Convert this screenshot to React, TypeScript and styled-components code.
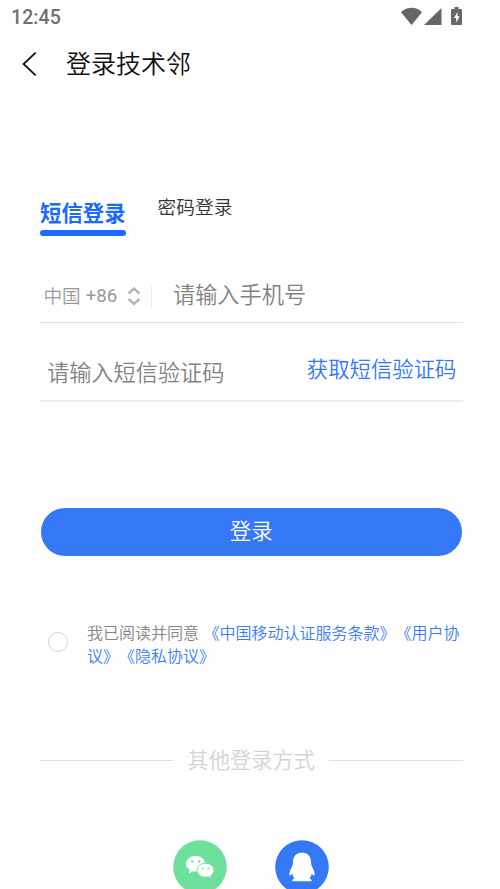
import React from 'react';
import styled, { createGlobalStyle } from 'styled-components';

const GlobalStyle = createGlobalStyle`
  * { box-sizing: border-box; }
  body { margin: 0; background: #fefefe; overflow: hidden; }
`;

const Screen = styled.main`
  width: 500px;
  height: 889px;
  overflow: hidden;
  display: flex;
  flex-direction: column;
  background: #fefefe;
  font-family: 'Noto Sans CJK SC', sans-serif;
  font-weight: 350;
  white-space: nowrap;
  text-spacing-trim: space-all;
`;

const StatusBar = styled.header`
  height: 34px;
  flex: none;
  display: flex;
  align-items: center;
  justify-content: space-between;
  padding: 0 37px 0 11px;
`;

const Clock = styled.time`
  font: 500 19.5px/34px Roboto, sans-serif;
  letter-spacing: 0.1px;
  color: #707070;
  padding-top: 1px;
`;

const StatusIcons = styled.svg`
  display: block;
  width: 62px;
  height: 34px;
`;

const TitleBar = styled.div`
  height: 60px;
  flex: none;
  display: flex;
  align-items: center;
  padding: 0 0 2px 21px;
`;

const BackIcon = styled.svg`
  width: 17px;
  height: 26px;
  margin: 2px 28px 0 0;
`;

const Title = styled.h1`
  margin: 0;
  padding-bottom: 3px;
  font-size: 25px;
  line-height: 36px;
  font-weight: inherit;
  color: #111;
`;

const Content = styled.section`
  width: 422.5px;
  margin: 101px 0 0 40px;
  flex: none;
`;

const Tabs = styled.nav`
  height: 42px;
  display: flex;
  gap: 32px;
`;

const Tab = styled.div<{ $active?: boolean }>`
  height: 42px;
  font-size: ${p => (p.$active ? '21.4px' : '18.7px')};
  line-height: ${p => (p.$active ? '34px' : '22px')};
  font-weight: ${p => (p.$active ? 700 : 'inherit')};
  color: ${p => (p.$active ? '#1a6aff' : '#333')};
`;

const Indicator = styled.div`
  height: 6px;
  margin-top: 1px;
  border-radius: 3px;
  background: #1a6aff;
`;

const Field = styled.div<{ $height: number; $top: number; $line: string }>`
  height: ${p => p.$height}px;
  margin-top: ${p => p.$top}px;
  display: flex;
  align-items: flex-start;
  border-bottom: ${p => p.$line};
`;

const Country = styled.div`
  display: flex;
  width: 112px;
  height: 22px;
  margin-top: 9px;
  align-items: center;
  padding-left: 3.5px;
  font-size: 18.6px;
  line-height: 32px;
  color: #999;
  border-right: 1px solid #e4ecf3;
`;

const CountryName = styled.span`
  padding-bottom: 4px;
`;

const DialCode = styled.span`
  font-family: Roboto, sans-serif;
  font-weight: 400;
  margin: 0 10px 0 5px;
  padding-bottom: 2px;
`;

const Sorter = styled.svg`
  width: 14px;
  height: 20px;
  margin-bottom: 3px;
`;

const Placeholder = styled.span<{ $left: number }>`
  margin: -2px 0 0 ${p => p.$left}px;
  font-size: 22.2px;
  line-height: 36px;
  color: #828282;
`;

const CodeButton = styled.button`
  margin: -5px 6px 0 auto;
  padding: 0;
  border: 0;
  background: none;
  font-family: inherit;
  font-weight: inherit;
  font-size: 21.4px;
  line-height: 36px;
  color: #3478f6;
`;

const Submit = styled.button`
  display: block;
  width: 421px;
  height: 48px;
  margin: 106px 0 0 0.75px;
  padding: 0 0 5px;
  border: 0;
  border-radius: 24px;
  background: #3478f6;
  color: #fff;
  font-family: inherit;
  font-weight: inherit;
  font-size: 21.4px;
  line-height: 43px;
`;

const Agreement = styled.div`
  display: flex;
  margin-top: 65px;
  padding-left: 8px;
`;

const Radio = styled.span`
  flex: none;
  width: 20px;
  height: 20px;
  margin: 11px 19px 0 0;
  border: 1px solid #d2d2d2;
  border-radius: 50%;
`;

const Terms = styled.p`
  margin: 0;
  font-size: 16px;
  line-height: 22.5px;
  color: #858585;
`;

const TermsLink = styled.span`
  margin-left: 1px;
  color: #3b7df6;
`;

const Divider = styled.div`
  display: flex;
  align-items: center;
  gap: 14px;
  height: 32px;
  margin-top: 78px;
  color: #d4d4d4;
`;

const DividerLabel = styled.span`
  padding-bottom: 3px;
  font-size: 21.3px;
  line-height: 32px;
`;

const Rule = styled.span`
  flex: 1;
  height: 1px;
  background: #dedede;
`;

const Providers = styled.div`
  display: flex;
  flex: none;
  gap: 48px;
  margin: 64px 0 0 133px;
`;

const ProviderIcon = styled.svg`
  display: block;
  flex: none;
  width: 54px;
  height: 54px;
`;

export default function App() {
  return (
    <Screen>
      <GlobalStyle />
      <StatusBar>
        <Clock>12:45</Clock>
        <StatusIcons viewBox="0 0 62 34" fill="#666">
          <path d="M0 12.2C6 6.4 15.5 6.4 21 12.2L10.6 25Z" />
          <path d="M23 25L40.5 8V25Z" />
          <path fillRule="evenodd" d="M53.5 7h4v2h2c1 0 1.500.5 1.500 1.500v13c0 1-.5 1.500-1.500 1.500h-8c-1 0-1.500-.5-1.500-1.500v-13c0-1 .5-1.500 1.500-1.500h2zM56.500 12l-3.500 6h2.200v4.500l3.500-6.300h-2.200z" />
        </StatusIcons>
      </StatusBar>
      <TitleBar>
        <BackIcon viewBox="0 0 17 26" fill="none" stroke="#111" strokeWidth="1.8">
          <path d="M14.700 1.700L2.500 13L14.700 24.300" />
        </BackIcon>
        <Title>登录技术邻</Title>
      </TitleBar>
      <Content>
        <Tabs>
          <Tab $active>
            短信登录
            <Indicator />
          </Tab>
          <Tab>密码登录</Tab>
        </Tabs>
        <Field $height={46} $top={40} $line="1px solid #dfe1e8">
          <Country>
            <CountryName>中国</CountryName>
            <DialCode>+86</DialCode>
            <Sorter viewBox="0 0 14 20" fill="none" stroke="#b5b5b5" strokeWidth="2.4">
              <path d="M1.500 7.500L7 2.500L12.500 7.500M1.500 13L7 18L12.500 13" />
            </Sorter>
          </Country>
          <Placeholder $left={21}>请输入手机号</Placeholder>
        </Field>
        <Field $height={47} $top={32} $line="2px solid #ededf3">
          <Placeholder $left={7}>请输入短信验证码</Placeholder>
          <CodeButton>获取短信验证码</CodeButton>
        </Field>
        <Submit>登录</Submit>
        <Agreement>
          <Radio />
          <Terms>
            我已阅读并同意 <TermsLink>《中国移动认证服务条款》《用户协<br />议》《隐私协议》</TermsLink>
          </Terms>
        </Agreement>
        <Divider>
          <Rule />
          <DividerLabel>其他登录方式</DividerLabel>
          <Rule />
        </Divider>
        <Providers>
          <ProviderIcon viewBox="0 0 54 54">
            <circle cx="27" cy="27" r="26.800" fill="#6ee09b" />
            <g fill="#fff">
              <path d="M22.500 16c-5.300 0-9.500 3.400-9.500 7.800 0 2.600 1.400 4.800 3.800 6.200l-.8 3.200 3.700-2c1 .3 1.900.4 3 .4 5.400 0 9.600-3.400 9.600-7.800S27.900 16 22.500 16z" />
              <path d="M32.500 23.300c-4.700 0-8.500 3.100-8.500 7s3.800 7 8.500 7c1.100 0 2.100-.2 3-.5l3 1.600-.7-2.700c2-1.300 3.200-3.200 3.200-5.400 0-3.900-3.800-7-8.500-7z" stroke="#6ee09b" strokeWidth="1" />
            </g>
            <g fill="#6ee09b">
              <circle cx="19.300" cy="21.500" r="1.200" />
              <circle cx="26" cy="21.500" r="1.200" />
              <circle cx="29.800" cy="28.600" r="1" />
              <circle cx="35.300" cy="28.600" r="1" />
            </g>
          </ProviderIcon>
          <ProviderIcon viewBox="0 0 54 54">
            <circle cx="27" cy="27" r="26.800" fill="#3478f6" />
            <path fill="#fff" d="M27 12.500c-5.600 0-9 4-9 9.200 0 1.600-.2 3.100-.8 4.500-1.700 3.300-3.500 6.800-2.700 9 .8.700 2.100-.8 2.800-1.800.4 2 1.200 3.500 2.300 4.800-1.600.6-2.600 1.800-2.200 3.100h19.200c.4-1.300-.6-2.500-2.200-3.100 1.100-1.300 1.900-2.800 2.300-4.800.7 1 2 2.500 2.800 1.800.8-2.200-1-5.700-2.700-9-.6-1.400-.8-2.900-.8-4.500 0-5.200-3.400-9.200-9-9.200z" />
          </ProviderIcon>
        </Providers>
      </Content>
    </Screen>
  );
}
